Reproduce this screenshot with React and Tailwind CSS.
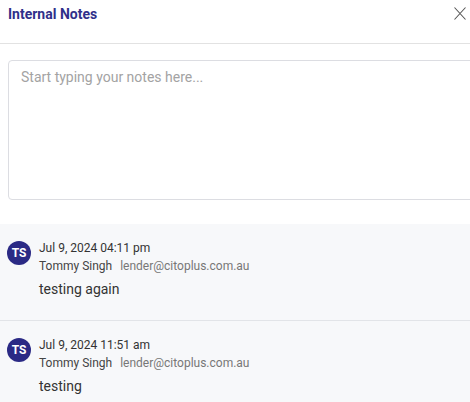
import React from 'react'

const NOTES = [
  { date: 'Jul 9, 2024 04:11 pm', name: 'Tommy Singh', email: 'lender@citoplus.com.au', text: 'testing again' },
  { date: 'Jul 9, 2024 11:51 am', name: 'Tommy Singh', email: 'lender@citoplus.com.au', text: 'testing' },
]

export default function App() {
  return (
    <div className="w-[470px] h-[402px] overflow-hidden bg-white font-['Roboto',sans-serif]">
      <div className="flex items-start justify-between h-[44px] border-b border-[#e2e2e2] pl-2 pr-[4px] pt-[5px]">
        <h2 className="text-sm font-bold text-[#30308a] leading-[18px]">Internal Notes</h2>
        <button className="text-[#555] mt-[2px]">
          <svg width="12" height="13" viewBox="0 0 12 13" fill="none" stroke="currentColor" strokeWidth="1.1">
            <path d="M0.5 0.5L11.5 12.5M11.5 0.5L0.5 12.5" />
          </svg>
        </button>
      </div>

      <div className="pl-2 pt-4 pb-6 -mr-4">
        <textarea
          placeholder="Start typing your notes here..."
          className="block w-full h-[140px] resize-none rounded border border-[#dcdde2] px-3 py-[6px] text-sm text-[#333] placeholder:text-[#a3a3a3] outline-none"
        />
      </div>

      <div className="bg-[#f7f8fa]">
        {NOTES.map((n, i) => (
          <div key={i} className={`flex gap-2 pl-[7px] pt-[15px] pb-[21px] ${i > 0 ? 'border-t border-[#e2e4e8]' : ''}`}>
            <div className="w-6 h-6 mt-[2px] shrink-0 rounded-full bg-[#2b2a85] text-white text-xs font-bold flex items-center justify-center">
              TS
            </div>
            <div>
              <div className="text-xs text-[#333] leading-[18px]">{n.date}</div>
              <div className="text-xs leading-[18px]">
                <span className="text-[#444]">{n.name}</span>
                <span className="text-[#777] ml-2">{n.email}</span>
              </div>
              <div className="text-sm text-[#333] mt-1 leading-5">{n.text}</div>
            </div>
          </div>
        ))}
      </div>
    </div>
  )
}
